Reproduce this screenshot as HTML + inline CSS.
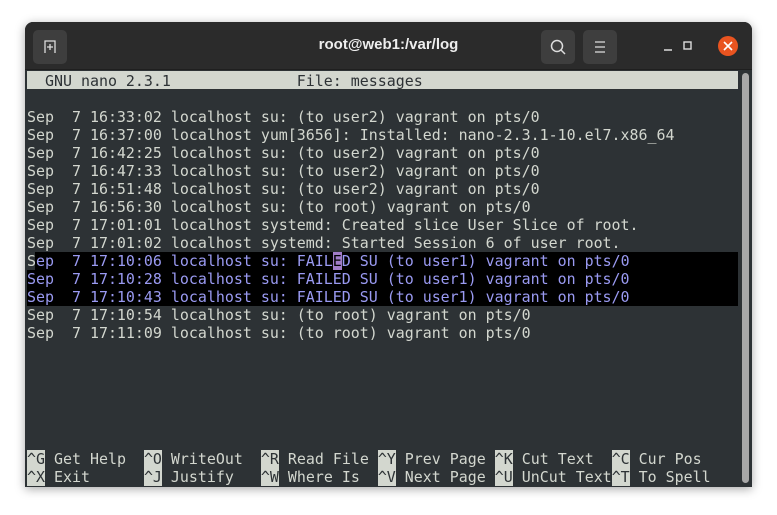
<!DOCTYPE html>
<html><head><meta charset="utf-8"><style>
*{margin:0;padding:0;box-sizing:border-box}
body{width:777px;height:515px;background:#fff;position:relative;overflow:hidden;font-family:"DejaVu Sans Mono","Liberation Mono",monospace}
.win{position:absolute;left:25px;top:22px;width:727px;height:465px;background:#2d3235;border-radius:8px 8px 0 0;overflow:hidden;box-shadow:0 2px 10px rgba(0,0,0,.35)}
.tb{position:absolute;left:0;top:0;width:727px;height:48px;background:#2b2b2b;border-bottom:1px solid #1f1f1f}
.btn{position:absolute;top:8px;width:34px;height:34px;background:#3e3e3e;border-radius:5px}
.title{position:absolute;left:0;width:727px;top:14px;text-align:center;color:#eee;font:bold 15px "Liberation Sans",sans-serif}
.row{position:absolute;left:2px;height:18px;line-height:18px;font-size:14.95px;white-space:pre;color:#d3d7cf;letter-spacing:0}
.hdr{position:absolute;left:2px;top:49px;width:711px;height:18px;background:#d3d7cf}
.hl{position:absolute;left:10px;width:703px;height:18px;background:#000}
.k{background:#d3d7cf;color:#2d3235}
.p{color:#9a9af2}
.sb{position:absolute;left:717px;top:51px;width:7px;height:410px;background:#a8a8a8;border-radius:4px}
</style></head><body>
<div class="win">
<div class="tb">
<div class="btn" style="left:8px"><svg width="34" height="34"><path d="M12 23V11h10v12M17 14v6M14 17h6" stroke="#ddd" stroke-width="1.3" fill="none"/></svg></div>
<div class="title">root@web1:/var/log</div>
<div class="btn" style="left:516px"><svg width="34" height="34"><circle cx="16" cy="16" r="5.5" stroke="#ddd" stroke-width="1.5" fill="none"/><path d="M20 20l4 4" stroke="#ddd" stroke-width="1.5"/></svg></div>
<div class="btn" style="left:558px"><svg width="34" height="34"><path d="M12 12h10M12 17h10M12 22h10" stroke="#ddd" stroke-width="1.3"/></svg></div>
<svg style="position:absolute;left:633px;top:14px" width="80" height="24"><path d="M6 14h8" stroke="#ddd" stroke-width="1.5"/><rect x="26" y="6" width="7" height="7" stroke="#ddd" stroke-width="1.4" fill="none"/><circle cx="70" cy="10" r="10" fill="#e95420"/><path d="M66 6l8 8M74 6l-8 8" stroke="#fff" stroke-width="1.6"/></svg>
</div>
<div class="hdr"></div>
<div class="row" style="top:50px;color:#2d3235">  GNU nano 2.3.1              File: messages</div>
<div class="hl" style="top:230px"></div><div class="hl" style="top:248px;left:2px;width:711px"></div><div class="hl" style="top:266px;left:2px;width:711px"></div>
<div class="row" style="top:86px">Sep  7 16:33:02 localhost su: (to user2) vagrant on pts/0</div>
<div class="row" style="top:104px">Sep  7 16:37:00 localhost yum[3656]: Installed: nano-2.3.1-10.el7.x86_64</div>
<div class="row" style="top:122px">Sep  7 16:42:25 localhost su: (to user2) vagrant on pts/0</div>
<div class="row" style="top:140px">Sep  7 16:47:33 localhost su: (to user2) vagrant on pts/0</div>
<div class="row" style="top:158px">Sep  7 16:51:48 localhost su: (to user2) vagrant on pts/0</div>
<div class="row" style="top:176px">Sep  7 16:56:30 localhost su: (to root) vagrant on pts/0</div>
<div class="row" style="top:194px">Sep  7 17:01:01 localhost systemd: Created slice User Slice of root.</div>
<div class="row" style="top:212px">Sep  7 17:01:02 localhost systemd: Started Session 6 of user root.</div>
<div class="row" style="top:230px">S<span class="p">ep  7 17:10:06 localhost su: FAIL<span style="background:#a07cc8;color:#000">E</span>D SU (to user1) vagrant on pts/0</span></div>
<div class="row p" style="top:248px">Sep  7 17:10:28 localhost su: FAILED SU (to user1) vagrant on pts/0</div>
<div class="row p" style="top:266px">Sep  7 17:10:43 localhost su: FAILED SU (to user1) vagrant on pts/0</div>
<div class="row" style="top:284px">Sep  7 17:10:54 localhost su: (to root) vagrant on pts/0</div>
<div class="row" style="top:302px">Sep  7 17:11:09 localhost su: (to root) vagrant on pts/0</div>
<div class="row" style="top:428px"><span class="k">^G</span> Get Help  <span class="k">^O</span> WriteOut  <span class="k">^R</span> Read File <span class="k">^Y</span> Prev Page <span class="k">^K</span> Cut Text  <span class="k">^C</span> Cur Pos</div>
<div class="row" style="top:446px"><span class="k">^X</span> Exit      <span class="k">^J</span> Justify   <span class="k">^W</span> Where Is  <span class="k">^V</span> Next Page <span class="k">^U</span> UnCut Text<span class="k">^T</span> To Spell</div>
<div class="sb"></div>
</div>
</body></html>
